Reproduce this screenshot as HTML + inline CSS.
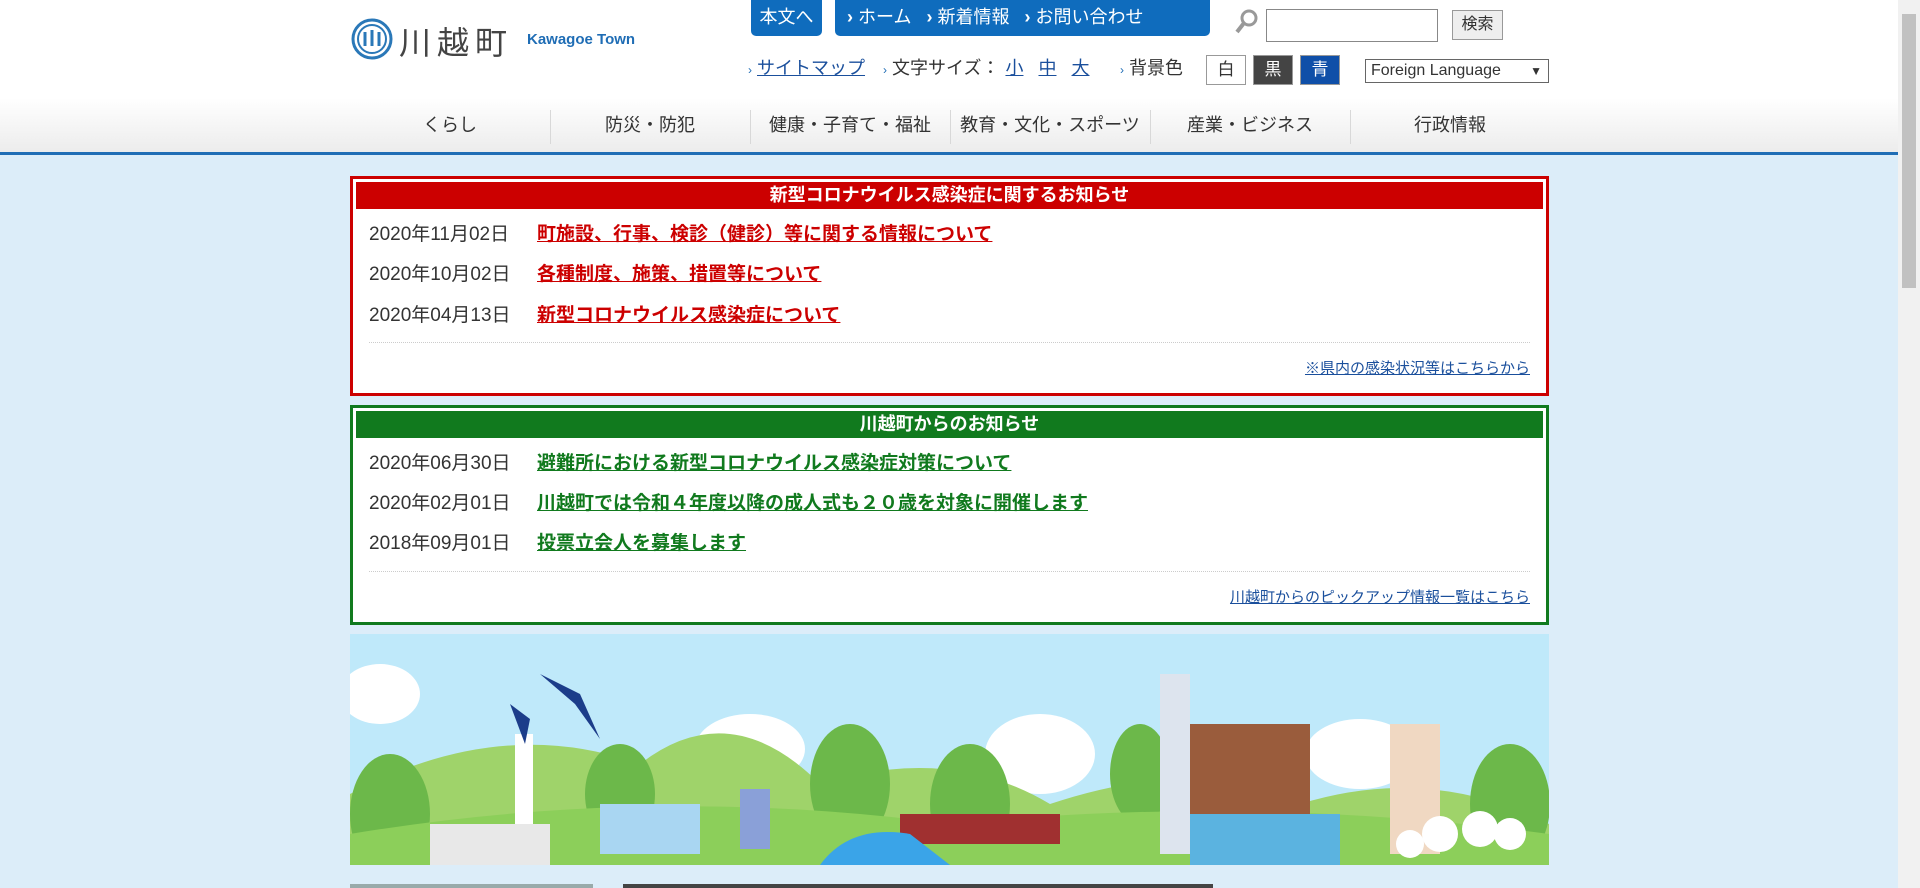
<!DOCTYPE html>
<html><head><meta charset="utf-8"><style>
*{margin:0;padding:0;box-sizing:border-box}
html,body{width:1920px;height:888px;overflow:hidden}
body{font-family:"Liberation Sans","Noto Sans CJK JP",sans-serif;background:#dcedf9;position:relative;color:#333}
.abs{position:absolute}
#hdr{position:absolute;left:0;top:0;width:1898px;height:98px;background:#fff}
#nav{position:absolute;left:0;top:98px;width:1898px;height:54px;background:linear-gradient(#fff,#ececec)}
#navline{position:absolute;left:0;top:152px;width:1898px;height:3px;background:#1f6db5}
.tab{position:absolute;top:0;height:36px;background:#0f6cbd;color:#fff;font-size:18px;line-height:34px;border-radius:0 0 5px 5px}
.nv{position:absolute;top:98px;height:54px;line-height:54px;text-align:center;font-size:18px;color:#333}
.sep{position:absolute;top:110px;width:1px;height:34px;background:#d8d8d8}
.box{position:absolute;left:350px;width:1199px;background:#fff;border:3px solid}
.bar{position:absolute;left:3px;right:3px;top:3px;height:27px;color:#fff;font-weight:bold;font-size:18px;text-align:center;line-height:27px}
.row{position:absolute;left:16px;font-size:19px;white-space:nowrap}
.row span{display:inline-block;width:168px;color:#333}
.row a{font-weight:bold;text-decoration:underline}
.dot{position:absolute;left:16px;right:16px;border-top:1px dotted #ccc}
.more{position:absolute;right:16px;font-size:15px;color:#1a4f9c;text-decoration:underline}
.sb{position:absolute;left:1898px;top:0;width:22px;height:888px;background:#f1f1f1}
.bg{font-size:17px;position:absolute;top:55px;width:40px;height:30px;line-height:28px;text-align:center;border:1px solid #999}
</style></head><body>
<div id="hdr"></div>
<svg class="abs" style="left:351px;top:18px" width="42" height="42" viewBox="0 0 42 42"><circle cx="21" cy="21" r="19" fill="none" stroke="#2a78b8" stroke-width="3"/><circle cx="21" cy="21" r="14" fill="none" stroke="#2a78b8" stroke-width="2"/><path d="M14 14v14M21 12v16M28 14v14" stroke="#2a78b8" stroke-width="3"/></svg>
<div class="abs" style="left:399px;top:18px;font-size:32px;letter-spacing:6px;color:#444">川越町</div>
<div class="abs" style="left:527px;top:31px;font-size:15px;color:#1f6db5;font-weight:bold">Kawagoe Town</div>
<div class="tab" style="left:751px;width:71px;text-align:center">本文へ</div>
<div class="tab" style="left:835px;width:375px;padding-left:12px"><b>›</b> ホーム&nbsp;&nbsp;&nbsp;<b>›</b> 新着情報&nbsp;&nbsp;&nbsp;<b>›</b> お問い合わせ</div>
<svg class="abs" style="left:1234px;top:8px" width="26" height="28" viewBox="0 0 26 28"><circle cx="15" cy="10" r="7" fill="none" stroke="#999" stroke-width="3"/><path d="M10 15L3 24" stroke="#999" stroke-width="4"/></svg>
<div class="abs" style="left:1266px;top:9px;width:172px;height:33px;border:1px solid #888;background:#fff"></div>
<div class="abs" style="left:1452px;top:10px;width:51px;height:30px;border:1px solid #999;background:#eee;font-size:16px;line-height:28px;text-align:center">検索</div>
<div class="abs" style="left:748px;top:54px;font-size:18px;white-space:nowrap"><span style="color:#1f6db5;font-size:12px">›</span> <u style="color:#1a4f9c">サイトマップ</u></div>
<div class="abs" style="left:883px;top:54px;font-size:18px;white-space:nowrap"><span style="color:#1f6db5;font-size:12px">›</span> 文字サイズ：<u style="color:#1a4f9c;margin-left:6px">小</u>&nbsp;&nbsp;&nbsp;<u style="color:#1a4f9c">中</u>&nbsp;&nbsp;&nbsp;<u style="color:#1a4f9c">大</u></div>
<div class="abs" style="left:1120px;top:54px;font-size:18px"><span style="color:#1f6db5;font-size:12px">›</span> 背景色</div>
<div class="bg" style="left:1206px;background:#fff;color:#333">白</div>
<div class="bg" style="left:1253px;background:#444;color:#fff">黒</div>
<div class="bg" style="left:1300px;background:#0f4fa8;color:#fff">青</div>
<div class="abs" style="left:1365px;top:59px;width:184px;height:24px;border:1px solid #666;background:#fff;font-size:16px;line-height:22px;padding-left:5px">Foreign Language<span style="position:absolute;right:6px;font-size:12px">▼</span></div>
<div id="nav"></div><div id="navline"></div>
<div class="nv" style="left:350px;width:200px">くらし</div><div class="sep" style="left:550px"></div>
<div class="nv" style="left:550px;width:200px">防災・防犯</div><div class="sep" style="left:750px"></div>
<div class="nv" style="left:750px;width:200px">健康・子育て・福祉</div><div class="sep" style="left:950px"></div>
<div class="nv" style="left:950px;width:200px">教育・文化・スポーツ</div><div class="sep" style="left:1150px"></div>
<div class="nv" style="left:1150px;width:200px">産業・ビジネス</div><div class="sep" style="left:1350px"></div>
<div class="nv" style="left:1350px;width:200px">行政情報</div>

<div class="box" style="top:176px;height:220px;border-color:#cc0000">
<div class="bar" style="background:#cc0000">新型コロナウイルス感染症に関するお知らせ</div>
<div class="row" style="top:40px"><span>2020年11月02日</span><a style="color:#c00">町施設、行事、検診（健診）等に関する情報について</a></div>
<div class="row" style="top:80px"><span>2020年10月02日</span><a style="color:#c00">各種制度、施策、措置等について</a></div>
<div class="row" style="top:121px"><span>2020年04月13日</span><a style="color:#c00">新型コロナウイルス感染症について</a></div>
<div class="dot" style="top:163px"></div>
<div class="more" style="top:178px">※県内の感染状況等はこちらから</div>
</div>
<div class="box" style="top:405px;height:220px;border-color:#117a1e">
<div class="bar" style="background:#117a1e">川越町からのお知らせ</div>
<div class="row" style="top:40px"><span>2020年06月30日</span><a style="color:#117a1e">避難所における新型コロナウイルス感染症対策について</a></div>
<div class="row" style="top:80px"><span>2020年02月01日</span><a style="color:#117a1e">川越町では令和４年度以降の成人式も２０歳を対象に開催します</a></div>
<div class="row" style="top:120px"><span>2018年09月01日</span><a style="color:#117a1e">投票立会人を募集します</a></div>
<div class="dot" style="top:163px"></div>
<div class="more" style="top:178px">川越町からのピックアップ情報一覧はこちら</div>
</div>

<svg class="abs" style="left:350px;top:634px" width="1199" height="231" viewBox="0 0 1199 231">
<rect width="1199" height="231" fill="#bfe9fa"/>
<g fill="#fff"><ellipse cx="30" cy="60" rx="40" ry="30"/><ellipse cx="400" cy="115" rx="55" ry="35"/><ellipse cx="690" cy="120" rx="55" ry="40"/><ellipse cx="1010" cy="120" rx="55" ry="35"/><ellipse cx="270" cy="210" rx="45" ry="30"/></g>
<path d="M0 160 Q150 80 290 130 Q380 60 470 150 Q600 110 700 170 Q850 120 950 170 Q1080 130 1199 190 V231 H0Z" fill="#9fd36a"/>
<g fill="#6cb84a"><ellipse cx="40" cy="180" rx="40" ry="60"/><ellipse cx="270" cy="160" rx="35" ry="50"/><ellipse cx="500" cy="150" rx="40" ry="60"/><ellipse cx="620" cy="170" rx="40" ry="60"/><ellipse cx="790" cy="140" rx="30" ry="50"/><ellipse cx="1160" cy="170" rx="40" ry="60"/></g>
<path d="M0 200 Q300 150 600 190 Q900 160 1199 200 V231 H0Z" fill="#8ccf5a"/>
<rect x="390" y="155" width="30" height="60" fill="#8aa0d8"/><rect x="550" y="180" width="160" height="30" fill="#a03030"/>
<rect x="165" y="100" width="18" height="130" fill="#fff"/>
<rect x="80" y="190" width="120" height="41" fill="#e8e8e8"/>
<rect x="250" y="170" width="100" height="50" fill="#a9d6f2"/>
<rect x="810" y="40" width="30" height="180" fill="#dde4ee"/>
<rect x="840" y="90" width="120" height="90" fill="#9a5c3c"/><rect x="840" y="180" width="150" height="51" fill="#5bb3e0"/>
<rect x="1040" y="90" width="50" height="130" fill="#f0d8c2"/>
<path d="M470 231 Q500 190 560 200 L600 231Z" fill="#3aa4e8"/>
<g fill="#fff"><circle cx="1090" cy="200" r="18"/><circle cx="1130" cy="195" r="18"/><circle cx="1160" cy="200" r="16"/><circle cx="1060" cy="210" r="14"/></g>
<path d="M190 40 L230 60 L250 105 L225 70Z M160 70 L180 85 L175 110Z" fill="#1c3d8a"/>
</svg>
<div class="abs" style="left:350px;top:884px;width:243px;height:4px;background:#9aa"></div>
<div class="abs" style="left:623px;top:884px;width:590px;height:4px;background:#444"></div>
<div class="sb"><div class="abs" style="left:4px;top:14px;width:14px;height:274px;background:#c1c1c1"></div></div>
</body></html>
